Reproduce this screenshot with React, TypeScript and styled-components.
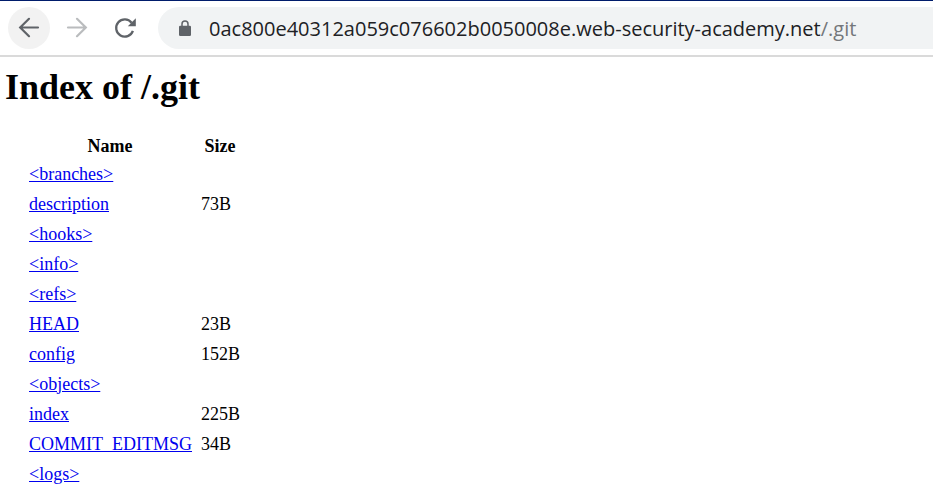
import React from "react";
import styled, { createGlobalStyle } from "styled-components";

const GlobalStyle = createGlobalStyle`
  * { box-sizing: border-box; }
  body {
    margin: 0;
    background: #fff;
    color: #000;
    font: 18px/20px "Liberation Serif", "Times New Roman", serif;
  }
`;

const Toolbar = styled.header`
  display: flex;
  align-items: center;
  gap: 6px;
  padding: 6px 0 6px 8px;
  border-top: 1px solid #001c6b;
  border-bottom: 2px solid #dadada;
`;

const NavButton = styled.button<{ $active?: boolean }>`
  display: flex;
  align-items: center;
  justify-content: center;
  flex: none;
  width: 42px;
  height: 42px;
  padding: 0;
  border: 0;
  border-radius: 50%;
  background: ${(p) => (p.$active ? "#f2f2f2" : "transparent")};
  color: #5f6368;

  &:disabled {
    color: #babcbe;
  }
`;

const AddressBar = styled.div`
  display: flex;
  align-items: center;
  flex: 1;
  min-width: 0;
  height: 42px;
  margin-left: 6px;
  padding-left: 20px;
  border-radius: 21px 0 0 21px;
  background: #f1f3f4;
`;

const UrlInput = styled.input<{ $path?: boolean }>`
  field-sizing: content;
  flex: ${(p) => (p.$path ? "1 1 0" : "none")};
  min-width: 0;
  height: 32px;
  padding: 0;
  border: 0;
  outline: 0;
  background: transparent;
  color: ${(p) => (p.$path ? "#74777a" : "#202124")};
  font: 20px/28px "Open Sans", "Segoe UI", sans-serif;
`;

const LockIcon = styled.svg`
  flex: none;
  margin-right: 17px;
`;

const Page = styled.main`
  padding: 9px 5px;
`;

const Title = styled.h1`
  margin: 0 0 26px;
  font-size: 36px;
  line-height: 42px;
`;

const Listing = styled.table`
  margin-left: 19px;
  border-collapse: collapse;
`;

const HeadCell = styled.th`
  height: 24px;
  padding: 0 4px;
`;

const Cell = styled.td`
  height: 30px;
  padding: 1px 4px 0 5px;
`;

const EntryLink = styled.a`
  color: #0000ee;
  text-decoration: underline;
`;

const entries = [
  { name: "<branches>", size: "" },
  { name: "description", size: "73B" },
  { name: "<hooks>", size: "" },
  { name: "<info>", size: "" },
  { name: "<refs>", size: "" },
  { name: "HEAD", size: "23B" },
  { name: "config", size: "152B" },
  { name: "<objects>", size: "" },
  { name: "index", size: "225B" },
  { name: "COMMIT_EDITMSG", size: "34B" },
  { name: "<logs>", size: "" },
];

const Arrow = ({ forward = false }: { forward?: boolean }) => (
  <svg
    width="22"
    height="22"
    viewBox="0 0 22 22"
    fill="none"
    stroke="currentColor"
    strokeWidth="2.2"
    strokeLinecap="round"
    aria-hidden="true"
  >
    <path d={forward ? "M2 10.5H20M11 1.8l8.8 8.7-8.8 8.7" : "M20 10.5H2M11 1.8l-8.8 8.7 8.8 8.7"} />
  </svg>
);

export default function App() {
  return (
    <>
      <GlobalStyle />
      <Toolbar>
        <NavButton $active type="button" aria-label="Back">
          <Arrow />
        </NavButton>
        <NavButton disabled type="button" aria-label="Forward">
          <Arrow forward />
        </NavButton>
        <NavButton type="button" aria-label="Reload">
          <svg width="22" height="22" viewBox="0 0 22 22" aria-hidden="true">
            <path d="M17.6 5.8A8.6 8.6 0 1 0 18.9 13.9" fill="none" stroke="currentColor" strokeWidth="2.3" />
            <path d="M21.8 1.3V9.3h-8z" fill="currentColor" />
          </svg>
        </NavButton>
        <AddressBar>
          <LockIcon width="14" height="18" viewBox="0 0 14 18" aria-hidden="true">
            <path d="M4 8V4.9a3 3 0 0 1 6 0V8" fill="none" stroke="#5f6368" strokeWidth="1.5" />
            <rect x="1" y="6.7" width="12" height="10.4" rx="1.3" fill="#5f6368" />
          </LockIcon>
          <UrlInput
            aria-label="Site address"
            spellCheck={false}
            defaultValue="0ac800e40312a059c076602b0050008e.web-security-academy.net"
          />
          <UrlInput $path aria-label="Page path" spellCheck={false} defaultValue="/.git" />
        </AddressBar>
      </Toolbar>
      <Page>
        <Title>Index of /.git</Title>
        <Listing>
          <thead>
            <tr>
              <HeadCell scope="col">Name</HeadCell>
              <HeadCell scope="col">Size</HeadCell>
            </tr>
          </thead>
          <tbody>
            {entries.map(({ name, size }) => (
              <tr key={name}>
                <Cell>
                  <EntryLink href={`/.git/${name.replace(/[<>]/g, "")}`}>{name}</EntryLink>
                </Cell>
                <Cell>{size}</Cell>
              </tr>
            ))}
          </tbody>
        </Listing>
      </Page>
    </>
  );
}
